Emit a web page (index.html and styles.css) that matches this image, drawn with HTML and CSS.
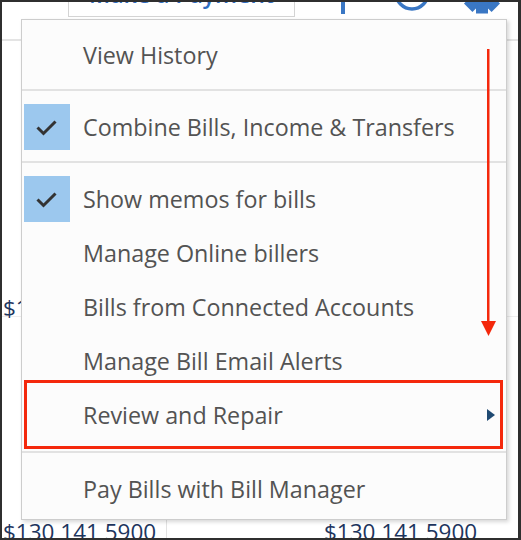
FILE: index.html
```html
<!DOCTYPE html>
<html>
<head>
<meta charset="utf-8">
<link rel="stylesheet" href="styles.css">
</head>
<body>
<div class="frame">
  <div class="toolbar">
    <div class="btn-pay">Make a Payment</div>
    <svg class="ico ico-plus" width="20" height="16" viewBox="0 0 20 16"><rect x="8" y="-20" width="4" height="32" fill="#3a77c4"/></svg>
    <svg class="ico ico-refresh" width="40" height="16" viewBox="0 0 40 16"><circle cx="20" cy="-9" r="16" fill="none" stroke="#3a77c4" stroke-width="3.5"/></svg>
    <svg class="ico ico-gear" width="44" height="16" viewBox="0 0 44 16">
      <g transform="translate(22,-8)" fill="#3a77c4">
        <circle r="15.5"/>
        <rect x="-6" y="-19.5" width="12" height="8"/>
        <rect x="-6" y="-19.5" width="12" height="8" transform="rotate(45)"/>
        <rect x="-6" y="-19.5" width="12" height="8" transform="rotate(90)"/>
        <rect x="-6" y="-19.5" width="12" height="8" transform="rotate(135)"/>
        <rect x="-6" y="-19.5" width="12" height="8" transform="rotate(180)"/>
        <rect x="-6" y="-19.5" width="12" height="8" transform="rotate(225)"/>
        <rect x="-6" y="-19.5" width="12" height="8" transform="rotate(270)"/>
        <rect x="-6" y="-19.5" width="12" height="8" transform="rotate(315)"/>
      </g>
    </svg>
  </div>
  <div class="grid">
    <div class="row row-head"></div>
    <div class="row row-mid"><span class="amt">$130 141 5900</span></div>
    <div class="row row-gap"></div>
    <div class="row row-bottom">
      <div class="cell c1"><span class="amt">$130 141 5900</span></div>
      <div class="cell c2"><span class="amt">$130 141 5900</span></div>
    </div>
  </div>

  <div class="menu">
    <div class="item"><span class="check"></span><span class="label">View History</span></div>
    <div class="sep"></div>
    <div class="item"><span class="check on"><svg width="46" height="46" viewBox="0 0 46 46"><path d="M13.5 23.5 L19.5 29.5 L31.5 17.5" fill="none" stroke="#333" stroke-width="3"/></svg></span><span class="label">Combine Bills, Income &amp; Transfers</span></div>
    <div class="sep"></div>
    <div class="item"><span class="check on"><svg width="46" height="46" viewBox="0 0 46 46"><path d="M13.5 23.5 L19.5 29.5 L31.5 17.5" fill="none" stroke="#333" stroke-width="3"/></svg></span><span class="label">Show memos for bills</span></div>
    <div class="item"><span class="check"></span><span class="label">Manage Online billers</span></div>
    <div class="item"><span class="check"></span><span class="label">Bills from Connected Accounts</span></div>
    <div class="item"><span class="check"></span><span class="label">Manage Bill Email Alerts</span></div>
    <div class="item"><span class="check"></span><span class="label">Review and Repair</span><span class="sub"></span></div>
    <div class="sep sep-last"></div>
    <div class="item"><span class="check"></span><span class="label">Pay Bills with Bill Manager</span></div>
  </div>

  <svg class="annot-arrow" width="18" height="290" viewBox="0 0 18 290">
    <rect x="7" y="0" width="2.5" height="276" fill="#f4280c"/>
    <polygon points="1,272 16,272 8.5,287" fill="#f4280c"/>
  </svg>
  <div class="annot-box"></div>
</div>
</body>
</html>
```

FILE: styles.css
```css
html, body {
  margin: 0;
  padding: 0;
  background: #ffffff;
}

.frame {
  position: relative;
  width: 521px;
  height: 540px;
  box-sizing: border-box;
  border-style: solid;
  border-color: #2f2f2f;
  border-width: 2px 3px 2px 2px;
  background: #ffffff;
  overflow: hidden;
  font-family: "Open Sans", "Noto Sans", sans-serif;
}

.toolbar {
  display: flex;
  align-items: flex-end;
  height: 16px;
  overflow: hidden;
}

.btn-pay {
  flex: none;
  box-sizing: border-box;
  width: 227px;
  height: 40px;
  margin-left: 66px;
  margin-bottom: 1px;
  border: 1px solid #d4d4d4;
  background: #ffffff;
  display: flex;
  align-items: flex-end;
  justify-content: center;
  padding-bottom: 10px;
  color: #2f6dc1;
  font-weight: 600;
  font-size: 23px;
  line-height: 23px;
  white-space: nowrap;
}

.ico {
  flex: none;
  display: block;
}
.ico-plus { margin-left: 38px; }
.ico-refresh { margin-left: 39px; }
.ico-gear { margin-left: 28px; }

.grid {
  display: flex;
  flex-direction: column;
}

.row {
  box-sizing: border-box;
}

.row-head {
  height: 23px;
  border-bottom: 2px solid #e4e4e4;
}

.row-mid {
  height: 276px;
  border-bottom: 1px solid #eeeeee;
  display: flex;
  align-items: flex-end;
  padding-left: 1px;
}
.row-mid .amt {
  margin-bottom: -3px;
}

.row-gap {
  height: 203px;
}

.row-bottom {
  display: flex;
  height: 20px;
}

.cell {
  box-sizing: border-box;
  padding-top: 1px;
}
.c1 {
  width: 165px;
  padding-left: 1px;
  border-right: 1px solid #e2e2e2;
}
.c2 {
  padding-left: 157px;
}

.amt {
  display: block;
  font-size: 22.5px;
  line-height: 22px;
  color: #1d355e;
  white-space: nowrap;
}

.menu {
  position: absolute;
  left: 19px;
  top: 17px;
  width: 486px;
  height: 501px;
  box-sizing: border-box;
  border: 1px solid #cdcdcd;
  background: #fcfcfc;
  box-shadow: 2px 2px 4px rgba(0, 0, 0, 0.16);
  padding-top: 8px;
  font-size: 23.3px;
  color: #535353;
}

.item {
  display: flex;
  align-items: center;
  height: 54px;
  white-space: nowrap;
}

.check {
  flex: none;
  width: 46px;
  height: 46px;
  margin-left: 2px;
  margin-right: 13px;
}
.check svg { display: block; }
.check.on { background: #9cc8ee; }

.label {
  line-height: 30px;
}

.sub {
  margin-left: auto;
  margin-right: 11px;
  width: 0;
  height: 0;
  border-top: 6px solid transparent;
  border-bottom: 6px solid transparent;
  border-left: 8px solid #1f4a72;
}

.sep {
  height: 2px;
  background: #e2e2e2;
  margin: 7px 0 9px;
}
.sep-last {
  margin: 9px 0 9px;
}

.annot-arrow {
  position: absolute;
  left: 478px;
  top: 47px;
  display: block;
}

.annot-box {
  position: absolute;
  left: 22px;
  top: 378px;
  width: 479px;
  height: 69px;
  box-sizing: border-box;
  border: 3px solid #f4280c;
}
```
